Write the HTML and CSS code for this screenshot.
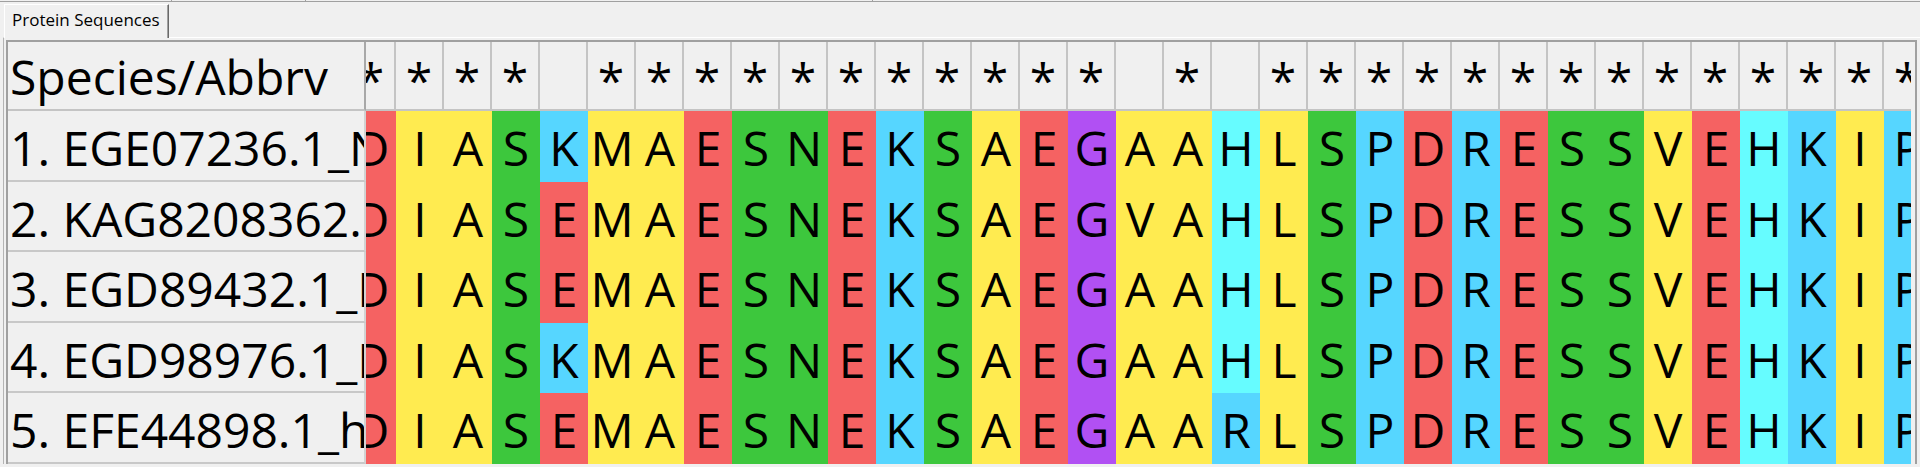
FILE: index.html
```html
<!DOCTYPE html>
<html>
<head>
<meta charset="utf-8">
<title>Protein Sequences</title>
<link rel="stylesheet" href="styles.css">
</head>
<body>
<div class="topline">
  <div class="seg s1"></div><div class="seg s2"></div><div class="seg s3"></div><div class="seg s4"></div>
</div>
<div class="tabrow">
  <div class="tab">Protein Sequences</div>
</div>
<div class="panel">
  <div class="grid">
    <div class="row hdr">
      <div class="lab">Species/Abbrv</div>
      <div class="view"><div class="strip">
        <div class="cell">*</div><div class="cell">*</div><div class="cell">*</div><div class="cell">*</div><div class="cell"></div><div class="cell">*</div><div class="cell">*</div><div class="cell">*</div><div class="cell">*</div><div class="cell">*</div><div class="cell">*</div><div class="cell">*</div><div class="cell">*</div><div class="cell">*</div><div class="cell">*</div><div class="cell">*</div><div class="cell"></div><div class="cell">*</div><div class="cell"></div><div class="cell">*</div><div class="cell">*</div><div class="cell">*</div><div class="cell">*</div><div class="cell">*</div><div class="cell">*</div><div class="cell">*</div><div class="cell">*</div><div class="cell">*</div><div class="cell">*</div><div class="cell">*</div><div class="cell">*</div><div class="cell">*</div><div class="cell">*</div>
      </div></div>
    </div>
    <div class="row">
      <div class="lab">1. EGE07236.1_N</div>
      <div class="view"><div class="strip">
        <div class="cell r">D</div><div class="cell y">I</div><div class="cell y">A</div><div class="cell g">S</div><div class="cell b">K</div><div class="cell y">M</div><div class="cell y">A</div><div class="cell r">E</div><div class="cell g">S</div><div class="cell g">N</div><div class="cell r">E</div><div class="cell b">K</div><div class="cell g">S</div><div class="cell y">A</div><div class="cell r">E</div><div class="cell p">G</div><div class="cell y">A</div><div class="cell y">A</div><div class="cell cy">H</div><div class="cell y">L</div><div class="cell g">S</div><div class="cell b">P</div><div class="cell r">D</div><div class="cell b">R</div><div class="cell r">E</div><div class="cell g">S</div><div class="cell g">S</div><div class="cell y">V</div><div class="cell r">E</div><div class="cell cy">H</div><div class="cell b">K</div><div class="cell y">I</div><div class="cell b">P</div>
      </div></div>
    </div>
    <div class="row">
      <div class="lab">2. KAG8208362.1</div>
      <div class="view"><div class="strip">
        <div class="cell r">D</div><div class="cell y">I</div><div class="cell y">A</div><div class="cell g">S</div><div class="cell r">E</div><div class="cell y">M</div><div class="cell y">A</div><div class="cell r">E</div><div class="cell g">S</div><div class="cell g">N</div><div class="cell r">E</div><div class="cell b">K</div><div class="cell g">S</div><div class="cell y">A</div><div class="cell r">E</div><div class="cell p">G</div><div class="cell y">V</div><div class="cell y">A</div><div class="cell cy">H</div><div class="cell y">L</div><div class="cell g">S</div><div class="cell b">P</div><div class="cell r">D</div><div class="cell b">R</div><div class="cell r">E</div><div class="cell g">S</div><div class="cell g">S</div><div class="cell y">V</div><div class="cell r">E</div><div class="cell cy">H</div><div class="cell b">K</div><div class="cell y">I</div><div class="cell b">P</div>
      </div></div>
    </div>
    <div class="row">
      <div class="lab">3. EGD89432.1_D</div>
      <div class="view"><div class="strip">
        <div class="cell r">D</div><div class="cell y">I</div><div class="cell y">A</div><div class="cell g">S</div><div class="cell r">E</div><div class="cell y">M</div><div class="cell y">A</div><div class="cell r">E</div><div class="cell g">S</div><div class="cell g">N</div><div class="cell r">E</div><div class="cell b">K</div><div class="cell g">S</div><div class="cell y">A</div><div class="cell r">E</div><div class="cell p">G</div><div class="cell y">A</div><div class="cell y">A</div><div class="cell cy">H</div><div class="cell y">L</div><div class="cell g">S</div><div class="cell b">P</div><div class="cell r">D</div><div class="cell b">R</div><div class="cell r">E</div><div class="cell g">S</div><div class="cell g">S</div><div class="cell y">V</div><div class="cell r">E</div><div class="cell cy">H</div><div class="cell b">K</div><div class="cell y">I</div><div class="cell b">P</div>
      </div></div>
    </div>
    <div class="row">
      <div class="lab">4. EGD98976.1_D</div>
      <div class="view"><div class="strip">
        <div class="cell r">D</div><div class="cell y">I</div><div class="cell y">A</div><div class="cell g">S</div><div class="cell b">K</div><div class="cell y">M</div><div class="cell y">A</div><div class="cell r">E</div><div class="cell g">S</div><div class="cell g">N</div><div class="cell r">E</div><div class="cell b">K</div><div class="cell g">S</div><div class="cell y">A</div><div class="cell r">E</div><div class="cell p">G</div><div class="cell y">A</div><div class="cell y">A</div><div class="cell cy">H</div><div class="cell y">L</div><div class="cell g">S</div><div class="cell b">P</div><div class="cell r">D</div><div class="cell b">R</div><div class="cell r">E</div><div class="cell g">S</div><div class="cell g">S</div><div class="cell y">V</div><div class="cell r">E</div><div class="cell cy">H</div><div class="cell b">K</div><div class="cell y">I</div><div class="cell b">P</div>
      </div></div>
    </div>
    <div class="row">
      <div class="lab">5. EFE44898.1_h</div>
      <div class="view"><div class="strip">
        <div class="cell r">D</div><div class="cell y">I</div><div class="cell y">A</div><div class="cell g">S</div><div class="cell r">E</div><div class="cell y">M</div><div class="cell y">A</div><div class="cell r">E</div><div class="cell g">S</div><div class="cell g">N</div><div class="cell r">E</div><div class="cell b">K</div><div class="cell g">S</div><div class="cell y">A</div><div class="cell r">E</div><div class="cell p">G</div><div class="cell y">A</div><div class="cell y">A</div><div class="cell b">R</div><div class="cell y">L</div><div class="cell g">S</div><div class="cell b">P</div><div class="cell r">D</div><div class="cell b">R</div><div class="cell r">E</div><div class="cell g">S</div><div class="cell g">S</div><div class="cell y">V</div><div class="cell r">E</div><div class="cell cy">H</div><div class="cell b">K</div><div class="cell y">I</div><div class="cell b">P</div>
      </div></div>
    </div>
  </div>
</div>
</body>
</html>
```

FILE: styles.css
```css
html, body {
  margin: 0;
  padding: 0;
}
body {
  width: 1920px;
  height: 467px;
  overflow: hidden;
  background: #f0f0f0;
  font-family: "Open Sans", "Noto Sans", sans-serif;
  color: #000;
}

/* thin strip at the very top (bottoms of toolbar buttons) */
.topline {
  display: flex;
  height: 2px;
}
.seg {
  box-sizing: border-box;
  height: 2px;
  border-bottom: 1px solid #a0a0a0;
  border-right: 1px solid #a0a0a0;
}
.s1 { width: 172px; }
.s2 { width: 134px; }
.s3 { width: 567px; }
.s4 { flex: 1; border-right: none; }

/* tab strip */
.tabrow {
  display: flex;
  align-items: flex-end;
  height: 35px;
  padding-left: 4px;
}
.tab {
  position: relative;
  z-index: 1;
  box-sizing: border-box;
  height: 34px;
  margin-bottom: -1px;
  padding: 3px 8px 0 7px;
  background: #f0f0f0;
  border-top: 1px solid #ffffff;
  border-left: 1px solid #ffffff;
  border-right: 1px solid #696969;
  box-shadow: inset -1px 0 0 #a0a0a0;
  font-size: 17px;
  line-height: 23px;
  white-space: nowrap;
}

/* tab page */
.panel {
  border-top: 1px solid #ffffff;
  margin-left: 3px;
  border-left: 1px solid #b4b4b4;
  padding: 2px 3px 0 2px;
}
.grid {
  border-top: 2px solid #a0a0a0;
  border-left: 2px solid #a0a0a0;
  border-right: 2px solid #a0a0a0;
  padding-right: 4px;
}

.row {
  display: flex;
  height: 70.5px;
}
.row.hdr {
  height: 69px;
}

.lab {
  flex: 0 0 358px;
  box-sizing: border-box;
  height: 100%;
  padding: 4px 0 0 2px;
  border-right: 2px solid #d2d2d2;
  border-bottom: 2px solid #c8c8c8;
  font-size: 48px;
  line-height: 66.5px;
  white-space: nowrap;
  overflow: hidden;
}
.hdr .lab {
  padding-top: 1px;
  line-height: 67px;
  border-right-color: #a8a8a8;
  border-bottom-color: #c4c4c4;
}

.view {
  flex: 1;
  min-width: 0;
  overflow: hidden;
  display: flex;
}
.strip {
  display: flex;
  margin-left: -18px;
}
.cell {
  flex: 0 0 48px;
  box-sizing: border-box;
  height: 100%;
  padding-top: 4px;
  text-align: center;
  font-size: 48px;
  line-height: 66.5px;
}
.hdr .cell {
  line-height: 67px;
  border-right: 2px solid #c4c4c4;
  border-bottom: 2px solid #c4c4c4;
}

/* residue colours */
.r  { background: #f56262; }
.y  { background: #ffeb50; }
.g  { background: #3dc73d; }
.b  { background: #56d6ff; }
.cy { background: #66fcff; }
.p  { background: #b150f3; }
```
